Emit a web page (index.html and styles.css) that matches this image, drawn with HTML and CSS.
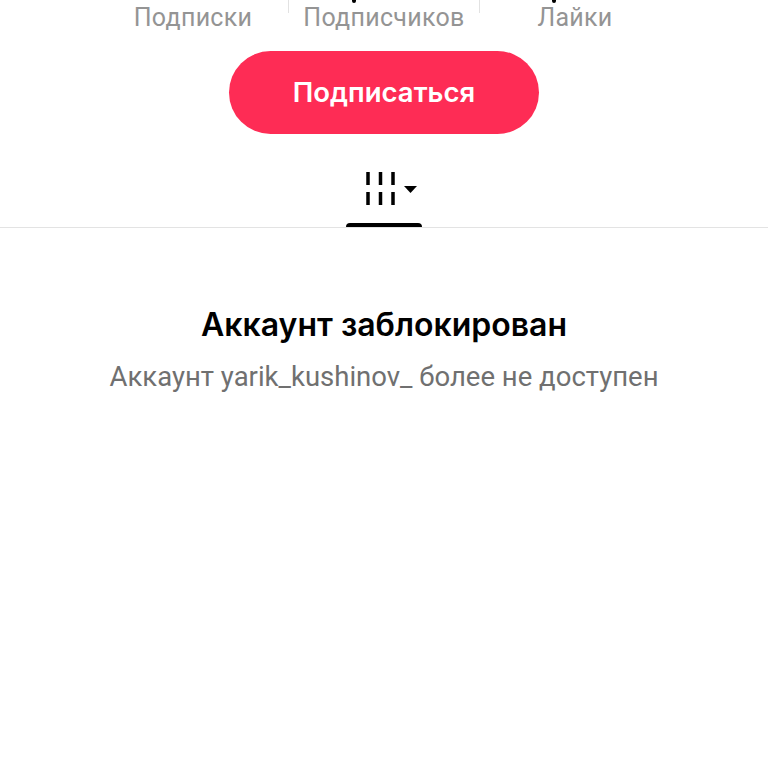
FILE: index.html
```html
<!DOCTYPE html>
<html lang="ru">
<head>
    <meta charset="UTF-8">
    <meta name="viewport" content="width=device-width, initial-scale=1.0">
    <title>Аккаунт заблокирован</title>
    <link rel="stylesheet" href="styles.css">
</head>
<body>
    <div class="stats">
        <div class="stat">Подписки</div>
        <div class="stat stat-middle">Подписчиков<span class="stat-cut"></span></div>
        <div class="stat stat-last">Лайки<span class="stat-cut"></span></div>
    </div>
    <button class="follow" type="button"><span class="follow-text">Подписаться</span></button>
    <div class="tabs">
        <div class="tab">
            <svg class="tab-icon" width="76" height="40" viewBox="0 0 76 40">
                <path d="M22 3V16M34.5 3V16M47 3V16M22 23V36M34.5 23V36M47 23V36" stroke="#000" stroke-width="3.5" fill="none"/>
                <path d="M58 17H71L64.5 24Z" fill="#000"/>
            </svg>
            <div class="tab-line"></div>
        </div>
    </div>
    <div class="message">
        <h1>Аккаунт заблокирован</h1>
        <p>Аккаунт yarik_kushinov_ более не доступен</p>
    </div>
</body>
</html>
```

FILE: styles.css
```css
body {
    margin: 0;
    height: 768px;
    overflow: hidden;
    background-color: #fff;
    font-family: Inter, "Noto Sans", sans-serif;
}

.stats {
    display: flex;
    justify-content: center;
    height: 31px;
}

.stat {
    position: relative;
    width: 191px;
    height: 31px;
    text-align: center;
    font-family: Roboto, sans-serif;
    font-size: 25px;
    letter-spacing: 0.3px;
    line-height: 35px;
    color: #949494;
}

.stat-cut {
    position: absolute;
    top: 0;
    left: 63px;
    width: 4px;
    height: 3px;
    border-radius: 0 0 2px 2px;
    background-color: #000;
}

.stat-last .stat-cut {
    left: 72px;
}

.stat-middle::before,
.stat-middle::after {
    content: "";
    position: absolute;
    top: 0;
    width: 1px;
    height: 13px;
    background-color: #e2e2e2;
}

.stat-middle::before {
    left: -1px;
}

.stat-middle::after {
    right: 0;
}

.follow {
    display: block;
    width: 310px;
    height: 83px;
    margin: 20px auto 0;
    padding: 0 0 2px;
    border: none;
    border-radius: 42px;
    background-color: #fe2c55;
    color: #fff;
    font-family: Inter, sans-serif;
    font-size: 27.5px;
    font-weight: 600;
}

.tabs {
    margin-top: 35px;
    height: 58px;
    border-bottom: 1px solid #e3e3e3;
    display: flex;
    justify-content: center;
}

.tab {
    width: 76px;
    display: flex;
    flex-direction: column;
    align-items: center;
    justify-content: space-between;
}

.tab-line {
    width: 76px;
    height: 4px;
    background-color: #000;
    border-radius: 4px 4px 0 0;
}

.message {
    text-align: center;
    padding-top: 78px;
}

.message h1 {
    margin: 0;
    font-size: 32px;
    font-weight: 600;
    line-height: 38px;
    color: #000;
}

.message p {
    margin: 15px 0 0;
    font-family: Roboto, sans-serif;
    font-size: 27.5px;
    line-height: 36px;
    color: #707070;
}
```
